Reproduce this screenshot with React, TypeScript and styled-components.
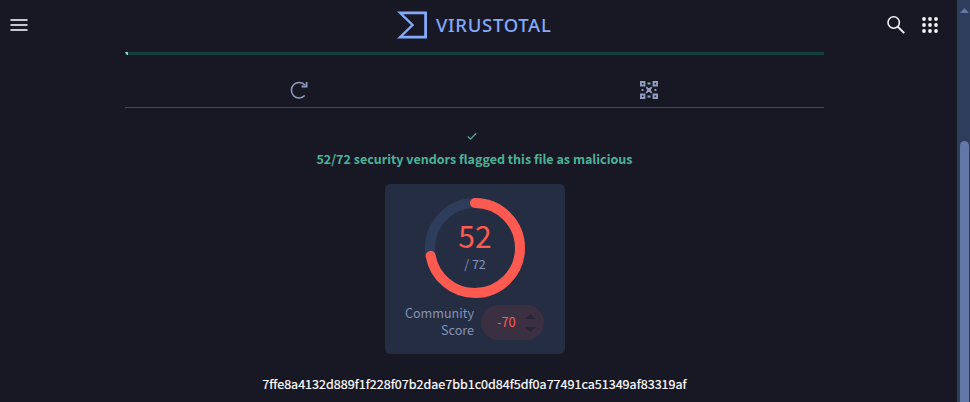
import React from "react";
import styled, { createGlobalStyle } from "styled-components";

const GlobalStyle = createGlobalStyle`
  * { box-sizing: border-box; }
  body {
    margin: 0;
    background: #181824;
    overflow: hidden;
    font-family: "Noto Sans CJK SC", "Open Sans", sans-serif;
  }
`;

const Shell = styled.div`
  display: flex;
  height: 402px;
  background: #181824;
`;

const Page = styled.div`
  flex: 1;
  display: flex;
  flex-direction: column;
  min-width: 0;
`;

const Header = styled.header`
  height: 52px;
  padding: 0 15px 2px 8px;
  display: grid;
  grid-template-columns: 1fr auto 1fr;
  align-items: center;
`;

const IconButton = styled.button`
  display: flex;
  padding: 0;
  border: 0;
  background: none;
  color: #f4f4f8;
`;

const Actions = styled.div`
  display: flex;
  justify-content: flex-end;
  gap: 10px;
`;

const Logo = styled.div`
  display: flex;
  align-items: center;
  gap: 9px;
  height: 28px;
  width: 156px;
  color: #84a9fb;
`;

const Wordmark = styled.span`
  font: 500 18.5px/28px "Noto Sans", sans-serif;
  letter-spacing: 0.7px;
  white-space: nowrap;
`;

const Content = styled.main`
  width: 699px;
  margin-left: 125px;
  display: flex;
  flex-direction: column;
`;

const Progress = styled.div`
  height: 3px;
  background: #153e3e;
  display: flex;
`;

const Tabs = styled.nav`
  height: 53px;
  display: grid;
  grid-template-columns: 1fr 1fr;
  border-bottom: 1px solid #42496a;
`;

const Tab = styled.div`
  display: flex;
  justify-content: center;
  padding-top: 25px;
  color: #8f9dc0;
`;

const Verdict = styled.section`
  display: flex;
  flex-direction: column;
  align-items: center;
  padding-top: 24px;
  color: #4cb399;
`;

const CheckRow = styled.div`
  display: flex;
  height: 10px;
  padding-right: 6px;
`;

const VerdictText = styled.div`
  margin-top: 8px;
  height: 18px;
  line-height: 18px;
  font-size: 12.53px;
  font-weight: 700;
  white-space: nowrap;
`;

const Card = styled.section`
  width: 180px;
  height: 170px;
  margin: 16px 0 0 260px;
  padding-top: 14px;
  border-radius: 5px;
  background: #252d43;
  display: flex;
  flex-direction: column;
  align-items: center;
`;

const Gauge = styled.div`
  display: grid;
  width: 100px;
  height: 100px;
  > * { grid-area: 1 / 1; }
`;

const GaugeLabel = styled.div`
  display: flex;
  flex-direction: column;
  align-items: center;
  padding-top: 16px;
`;

const Detections = styled.span`
  color: #ff5a50;
  font-size: 30px;
  line-height: 42px;
`;

const Engines = styled.span`
  color: #8493b8;
  font-size: 12.6px;
  line-height: 16px;
`;

const Community = styled.div`
  display: flex;
  align-items: flex-start;
  gap: 7px;
  margin-top: 7px;
  padding-right: 1px;
`;

const CommunityLabel = styled.div`
  width: 69px;
  margin-top: -1px;
  display: flex;
  flex-direction: column;
  align-items: flex-end;
  color: #8493b8;
  font-size: 12.6px;
  line-height: 17px;
`;

const ScorePill = styled.div`
  width: 63px;
  height: 35px;
  padding: 0 8px 0 16px;
  border-radius: 18px;
  background: #3b3042;
  color: #ff5a50;
  font-size: 12.8px;
  line-height: 17px;
  display: flex;
  align-items: center;
  justify-content: space-between;
`;

const Score = styled.span`
  padding-bottom: 2px;
`;

const Hash = styled.div`
  margin-top: 21px;
  height: 18px;
  line-height: 18px;
  text-align: center;
  color: #fff;
  font-size: 12.56px;
  -webkit-text-stroke: 0.2px #fff;
  white-space: nowrap;
`;

const Scrollbar = styled.aside`
  width: 13px;
  background: #2e3d5c;
  display: flex;
  flex-direction: column;
  padding: 8px 1px 0 3px;
`;

const Thumb = styled.div`
  flex: 1;
  margin-top: 128px;
  border-radius: 5px 5px 0 0;
  background: #6478a8;
`;

const Menu = () => (
  <svg width="22" height="14" viewBox="0 0 22 14" fill="#c9c7d1">
    <path d="M2.5 1h17v2h-17zM2.5 6h17v2h-17zM2.5 11h17v2h-17z" />
  </svg>
);

const Mark = () => (
  <svg width="30" height="28" viewBox="0 0 30 28" fill="currentColor" fillRule="evenodd">
    <path d="M0 0.5H30V27.5H0L14 14ZM6.2 3.3L17.2 14L6.2 24.8H27.2V3.3Z" />
  </svg>
);

const Search = () => (
  <svg width="24" height="24" viewBox="0 0 24 24" fill="none" stroke="currentColor" strokeWidth="1.6">
    <circle cx="9.7" cy="9.5" r="5.7" />
    <path d="M13.7 13.6L20.2 20.2" strokeWidth="1.9" />
  </svg>
);

const AppsGrid = () => (
  <svg width="24" height="24" viewBox="0 0 24 24" fill="currentColor">
    {[6, 12, 18].map((y) => [6, 12, 18].map((x) => <circle key={`${x}-${y}`} cx={x} cy={y} r="1.9" />))}
  </svg>
);

const Reload = () => (
  <svg width="22" height="20" viewBox="0 0 22 20" fill="none" stroke="currentColor" strokeWidth="1.5">
    <path d="M16 5A7.8 7.8 0 1 0 15.8 15.6" />
    <path d="M17.6 2V6.5H12.6" strokeWidth="1.8" />
  </svg>
);

const GraphIcon = () => (
  <svg width="20" height="20" viewBox="0 0 20 20" fill="none" stroke="currentColor" strokeWidth="1.9">
    <path d="M1.95 1.95h3.5v3.5h-3.5zM14.55 1.95h3.5v3.5h-3.5zM1.95 14.55h3.5v3.5h-3.5zM14.55 14.55h3.5v3.5h-3.5z" />
    <path d="M8.5 3.5h3M8.5 16.5h3M3.5 9v2M16.5 9v2M7.2 7.2l5.6 5.6M12.8 7.2l-5.6 5.6" />
    <path d="M8 8h4v4H8z" fill="currentColor" stroke="none" />
  </svg>
);

export default function App() {
  return (
    <>
      <GlobalStyle />
      <Shell>
        <Page>
          <Header>
            <IconButton aria-label="Menu"><Menu /></IconButton>
            <Logo>
              <Mark />
              <Wordmark>VIRUSTOTAL</Wordmark>
            </Logo>
            <Actions>
              <IconButton aria-label="Search"><Search /></IconButton>
              <IconButton aria-label="Apps"><AppsGrid /></IconButton>
            </Actions>
          </Header>
          <Content>
            <Progress>
              <svg width="3" height="3" viewBox="0 0 3 3"><path d="M0 0H3V3H2Z" fill="#8ed7df" /></svg>
            </Progress>
            <Tabs>
              <Tab><Reload /></Tab>
              <Tab><GraphIcon /></Tab>
            </Tabs>
            <Verdict>
              <CheckRow>
                <svg width="10" height="10" viewBox="0 0 10 10" fill="none" stroke="currentColor" strokeWidth="1.2">
                  <path d="M0.8 4.4L3.4 7.1L9.3 1.3" />
                </svg>
              </CheckRow>
              <VerdictText>52/72 security vendors flagged this file as malicious</VerdictText>
            </Verdict>
            <Card>
              <Gauge>
                <svg width="100" height="100" viewBox="0 0 100 100" fill="none" strokeWidth="10">
                  <circle cx="50" cy="50" r="45" stroke="#2e3d5c" />
                  <circle
                    cx="50" cy="50" r="45" stroke="#ff5a50" strokeLinecap="round"
                    pathLength="72" strokeDasharray="52 72" transform="rotate(-90 50 50)"
                  />
                </svg>
                <GaugeLabel>
                  <Detections>52</Detections>
                  <Engines>/ 72</Engines>
                </GaugeLabel>
              </Gauge>
              <Community>
                <CommunityLabel>
                  <span>Community</span>
                  <span>Score</span>
                </CommunityLabel>
                <ScorePill>
                  <Score>-70</Score>
                  <svg width="11" height="18" viewBox="0 0 11 18" fill="#292536">
                    <path d="M0 5L5.5 0L11 5ZM0 13L5.5 18L11 13Z" />
                  </svg>
                </ScorePill>
              </Community>
            </Card>
            <Hash>7ffe8a4132d889f1f228f07b2dae7bb1c0d84f5df0a77491ca51349af83319af</Hash>
          </Content>
        </Page>
        <Scrollbar>
          <svg width="9" height="5" viewBox="0 0 9 5"><path d="M0 5L4.5 0L9 5Z" fill="#6478a8" /></svg>
          <Thumb />
        </Scrollbar>
      </Shell>
    </>
  );
}
